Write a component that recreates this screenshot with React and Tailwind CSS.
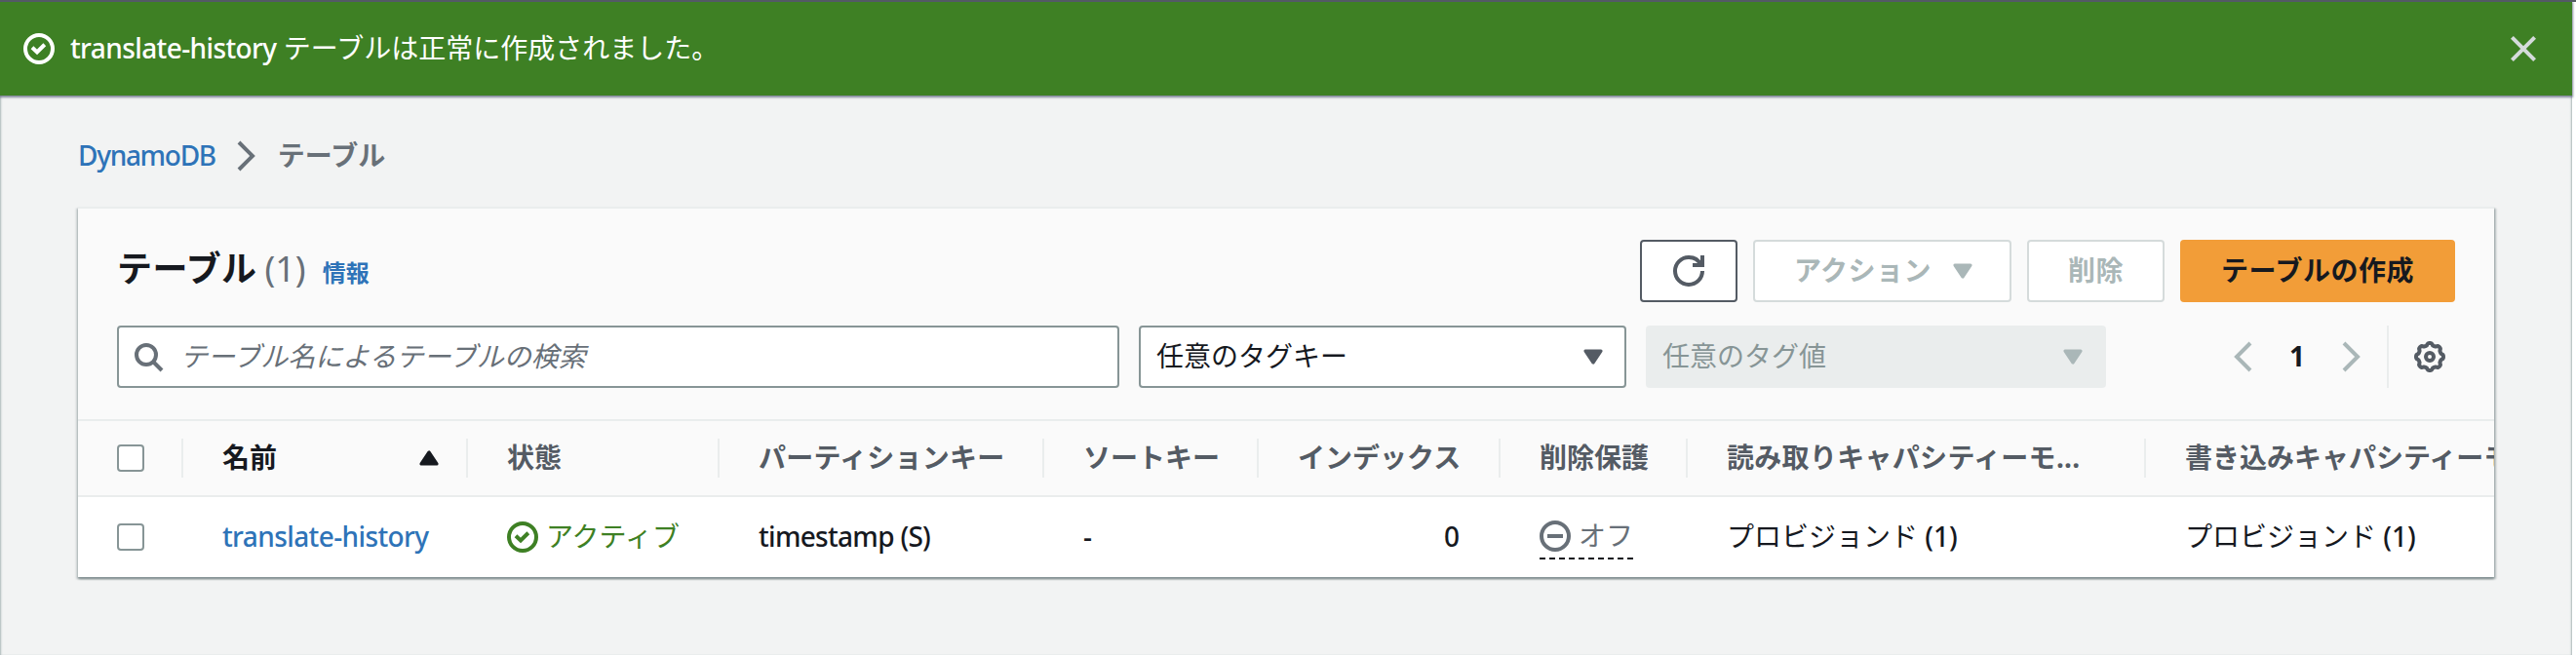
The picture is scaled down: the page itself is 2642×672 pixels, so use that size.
import React from "react";

const fontStack = "font-['Noto_Sans','Noto_Sans_CJK_JP',sans-serif]";

function StatusOk({ className }) {
  return (
    <svg viewBox="0 0 16 16" className={className} fill="none" stroke="currentColor" strokeWidth="2">
      <circle cx="8" cy="8" r="7" />
      <path d="M4.5 7.4 7 9.7 10.9 5.9" />
    </svg>
  );
}

function StatusOff({ className }) {
  return (
    <svg viewBox="0 0 16 16" className={className} fill="none" stroke="currentColor" strokeWidth="2">
      <circle cx="8" cy="8" r="7" />
      <path d="M4 8h8" />
    </svg>
  );
}

function Chevron({ className, flip }) {
  return (
    <svg viewBox="0 0 16 16" className={className} fill="none" stroke="currentColor" strokeWidth="2">
      <path d={flip ? "M12 1 5 8l7 7" : "M4 1l7 7-7 7"} />
    </svg>
  );
}

function Caret({ className, up }) {
  return (
    <svg viewBox="0 0 16 16" className={className} fill="currentColor" stroke="currentColor" strokeWidth="1.6" strokeLinejoin="round">
      <path d={up ? "M4 11h8L8 5z" : "M4 5h8l-4 6z"} />
    </svg>
  );
}

function Refresh({ className }) {
  return (
    <svg viewBox="0 0 16 16" className={className} fill="none" stroke="currentColor" strokeWidth="2">
      <path d="M10 5h5V0" />
      <path d="M15 8a6.957 6.957 0 0 1-7 7 6.957 6.957 0 0 1-7-7 6.957 6.957 0 0 1 7-7 6.87 6.87 0 0 1 6.3 4" />
    </svg>
  );
}

function Gear({ className }) {
  const pts = [];
  for (let i = 0; i < 96; i++) {
    const a = (i / 96) * Math.PI * 2;
    const r = 6.45 + 0.55 * Math.tanh(2.2 * Math.cos(8 * a));
    pts.push(`${(8 + r * Math.cos(a)).toFixed(2)},${(8 + r * Math.sin(a)).toFixed(2)}`);
  }
  return (
    <svg viewBox="0 0 16 16" className={className} fill="none" stroke="currentColor" strokeWidth="2" strokeLinejoin="round">
      <polygon points={pts.join(" ")} />
      <circle cx="8" cy="8" r="2" />
    </svg>
  );
}

function Checkbox() {
  return <span className="block size-7 rounded-[4px] border-2 border-[#879596] bg-white" />;
}

function Label({ className = "", children }) {
  return <span className={`block pb-[3px] ${className}`}>{children}</span>;
}

function HeadCell({ className, children, last }) {
  return (
    <div className={`flex h-10 shrink-0 items-center border-[#eaeded] pl-10 font-bold text-[#545b64] ${last ? "" : "border-r-2"} ${className}`}>
      {children}
    </div>
  );
}

function Cell({ className, children }) {
  return <div className={`flex shrink-0 items-center pl-10 ${className}`}>{children}</div>;
}

export default function App() {
  return (
    <div className={`h-[672px] w-[2642px] overflow-hidden bg-white text-[28px] leading-[44px] whitespace-nowrap text-[#16191f] ${fontStack}`}>
      <div className="h-[2px] bg-[#545b64]" />
      <div className="relative flex h-24 w-[2638px] items-center bg-[#3e8024] pr-[37px] pl-6 text-white shadow-[0_1px_2px_1px_rgba(84,91,120,0.7)]">
        <StatusOk className="size-8 shrink-0" />
        <span className="ml-4 flex-1 pb-[2px]">
          <span className="font-medium tracking-[-0.6px]">translate-history</span> テーブルは正常に作成されました。
        </span>
        <svg viewBox="0 0 26 26" className="size-[26px]" stroke="#d5dbdb" strokeWidth="4">
          <path d="M1.4 1.4l23.2 23.2M24.6 1.4 1.4 24.6" />
        </svg>
      </div>

      <main className="h-[574px] w-[2638px] bg-[#f2f3f3] px-20 shadow-[inset_2px_0_2px_-1px_#aab7b8,inset_-2px_0_2px_-1px_#aab7b8]">
        <nav className="flex h-[114px] items-center pt-[10px]">
          <span className="pb-[2px] font-medium tracking-[-1.3px] text-[#2e73b8]">DynamoDB</span>
          <Chevron className="mx-4 size-8 text-[#687078]" />
          <span className="pb-[2px] font-bold text-[#687078]">テーブル</span>
        </nav>

        <section className="h-[380px] w-[2478px] border-t-2 border-[#eaeded] bg-white shadow-[0_2px_2px_0_#879596,2px_2px_2px_0_rgba(0,28,36,0.25),-2px_2px_2px_0_rgba(0,28,36,0.15)]">
          <div className="h-[218px] border-b-2 border-[#eaeded] bg-[#fafafa] px-10 pt-8">
            <div className="flex h-16 items-center">
              <h1 className="flex flex-1 items-baseline pb-[1px] text-[36px] font-bold">
                <span className="tracking-[0.4px]">テーブル</span>
                <span className="ml-2 font-normal text-[#687078]">(1)</span>
                <span className="ml-[17px] text-[24px] text-[#2e73b8]">情報</span>
              </h1>
              <div className="flex gap-4 font-bold tracking-[0.5px]">
                <button className="flex h-16 w-[100px] items-center justify-center rounded-[4px] border-2 border-[#545b64] bg-white text-[#545b64]">
                  <Refresh className="size-8" />
                </button>
                <button className="flex h-16 w-[265px] items-center rounded-[4px] border-2 border-[#d5dbdb] bg-white pl-10 text-[#aab7b8]">
                  <Label>アクション</Label>
                  <Caret className="ml-4 size-8" />
                </button>
                <button className="flex h-16 w-[141px] items-center justify-center rounded-[4px] border-2 border-[#d5dbdb] bg-white text-[#aab7b8]">
                  <Label>削除</Label>
                </button>
                <button className="flex h-16 w-[282px] items-center justify-center rounded-[4px] bg-[#f29d38]">
                  <Label>テーブルの作成</Label>
                </button>
              </div>
            </div>

            <div className="mt-6 flex h-16 items-center">
              <div className="flex h-16 w-[1028px] items-center rounded-[4px] border-2 border-[#879596] bg-white pl-[14px] text-[#687078]">
                <svg viewBox="0 0 16 16" className="size-8" fill="none" stroke="currentColor" strokeWidth="2">
                  <circle cx="7" cy="7" r="5" />
                  <path d="m15 15-4.5-4.5" />
                </svg>
                <Label className="ml-[17px] italic">テーブル名によるテーブルの検索</Label>
              </div>
              <div className="ml-5 flex h-16 w-[500px] items-center justify-between rounded-[4px] border-2 border-[#879596] bg-white pr-4 pl-4">
                <Label>任意のタグキー</Label>
                <Caret className="size-8 text-[#545b64]" />
              </div>
              <div className="ml-5 flex h-16 w-[472px] items-center justify-between rounded-[4px] bg-[#eaeded] pr-[18px] pl-[17px] text-[#879596]">
                <Label>任意のタグ値</Label>
                <Caret className="size-8 text-[#aab7b8]" />
              </div>
              <div className="ml-[124px] flex h-16 flex-1 items-center">
                <Chevron flip className="size-8 text-[#aab7b8]" />
                <Label className="w-[80px] text-center font-bold">1</Label>
                <Chevron className="size-8 text-[#aab7b8]" />
                <span className="ml-[20px] h-16 w-[2px] bg-[#eaeded]" />
                <Gear className="ml-[26px] size-8 text-[#545b64]" />
              </div>
            </div>
          </div>

          <div className="flex h-[78px] items-center overflow-hidden border-b-2 border-[#eaeded] bg-[#fafafa]">
            <HeadCell className="w-[108px]"><Checkbox /></HeadCell>
            <HeadCell className="w-[292px] justify-between pr-[22px]">
              <Label className="text-[#16191f]">名前</Label>
              <Caret up className="size-8 text-[#16191f]" />
            </HeadCell>
            <HeadCell className="w-[258px]"><Label>状態</Label></HeadCell>
            <HeadCell className="w-[333px]"><Label className="tracking-[0.25px]">パーティションキー</Label></HeadCell>
            <HeadCell className="w-[220px]"><Label>ソートキー</Label></HeadCell>
            <HeadCell className="w-[248px]"><Label>インデックス</Label></HeadCell>
            <HeadCell className="w-[192px]"><Label>削除保護</Label></HeadCell>
            <HeadCell className="w-[470px]"><Label className="tracking-[0.3px]">読み取りキャパシティーモ...</Label></HeadCell>
            <HeadCell last className="w-[470px]"><Label>書き込みキャパシティーモ...</Label></HeadCell>
          </div>

          <div className="flex h-[82px] items-center overflow-hidden">
            <Cell className="w-[108px]"><Checkbox /></Cell>
            <Cell className="w-[292px] font-medium tracking-[-0.6px] text-[#2e73b8]"><Label>translate-history</Label></Cell>
            <Cell className="w-[258px] text-[#3e8024]">
              <StatusOk className="mr-2 size-8" /><Label>アクティブ</Label>
            </Cell>
            <Cell className="w-[333px] font-medium tracking-[-0.7px]"><Label>timestamp (S)</Label></Cell>
            <Cell className="w-[220px] font-medium"><Label>-</Label></Cell>
            <Cell className="w-[248px] justify-end pr-[42px] font-medium"><Label>0</Label></Cell>
            <Cell className="w-[192px] text-[#687078]">
              <div className="flex flex-col">
                <div className="flex h-11 items-center">
                  <StatusOff className="mr-2 size-8" /><Label>オフ</Label>
                </div>
                <div className="h-[2px] w-24 bg-[repeating-linear-gradient(to_right,#16191f_0_6px,transparent_6px_10px)]" />
              </div>
            </Cell>
            <Cell className="w-[470px]"><Label>プロビジョンド <span className="font-medium">(1)</span></Label></Cell>
            <Cell className="w-[470px]"><Label>プロビジョンド <span className="font-medium">(1)</span></Label></Cell>
          </div>
        </section>
      </main>
    </div>
  );
}
